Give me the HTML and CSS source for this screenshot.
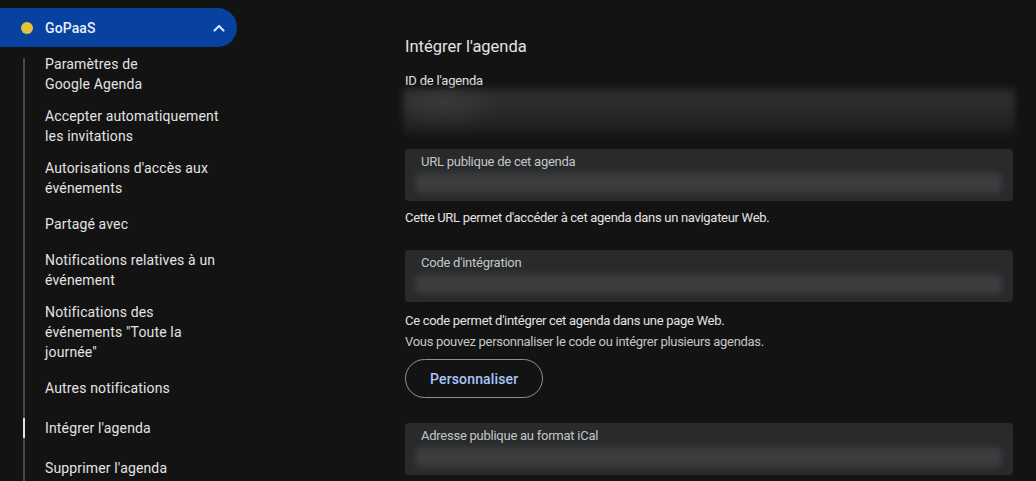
FILE: index.html
```html
<!DOCTYPE html>
<html lang="fr">
<head>
<meta charset="utf-8">
<title>Intégrer l'agenda</title>
<link rel="stylesheet" href="styles.css">
</head>
<body>
<div class="page">
  <aside class="sidebar">
    <div class="cal-header">
      <span class="dot"></span>
      <span class="cal-name">GoPaaS</span>
      <svg class="chevron" width="14" height="14" viewBox="0 0 14 14"><path d="M2.5 9.5 L7 5 L11.5 9.5" fill="none" stroke="#d3e3fd" stroke-width="2.2" stroke-linecap="round" stroke-linejoin="round"/></svg>
    </div>
    <nav class="nav">
      <div class="nav-item">Paramètres de<br>Google Agenda</div>
      <div class="nav-item">Accepter automatiquement<br>les invitations</div>
      <div class="nav-item">Autorisations d'accès aux<br>événements</div>
      <div class="nav-item">Partagé avec</div>
      <div class="nav-item">Notifications relatives à un<br>événement</div>
      <div class="nav-item">Notifications des<br>événements "Toute la<br>journée"</div>
      <div class="nav-item">Autres notifications</div>
      <div class="nav-item active">Intégrer l'agenda</div>
      <div class="nav-item">Supprimer l'agenda</div>
    </nav>
  </aside>
  <main class="main">
    <h2 class="title">Intégrer l'agenda</h2>
    <div class="id-label">ID de l'agenda</div>
    <div class="id-blur"></div>

    <div class="field first">
      <div class="field-label">URL publique de cet agenda</div>
      <div class="field-bar"></div>
    </div>
    <p class="help">Cette URL permet d'accéder à cet agenda dans un navigateur Web.</p>

    <div class="field second">
      <div class="field-label">Code d'intégration</div>
      <div class="field-bar"></div>
    </div>
    <p class="help2 lead">Ce code permet d'intégrer cet agenda dans une page Web.</p>
    <p class="help2 muted">Vous pouvez personnaliser le code ou intégrer plusieurs agendas.</p>
    <button class="btn">Personnaliser</button>

    <div class="field third">
      <div class="field-label">Adresse publique au format iCal</div>
      <div class="field-bar"></div>
    </div>
  </main>
</div>
</body>
</html>
```

FILE: styles.css
```css
* { box-sizing: border-box; }
html, body {
  margin: 0;
  padding: 0;
  background: #131314;
  height: 100%;
  overflow: hidden;
}
body {
  font-family: Roboto, "Liberation Sans", Arial, sans-serif;
  color: #e3e3e3;
}
.page {
  display: flex;
  align-items: flex-start;
}
.sidebar {
  width: 237px;
  flex: none;
  padding-top: 8px;
}
.cal-header {
  height: 39px;
  background: #0842a0;
  border-radius: 0 20px 20px 0;
  display: flex;
  align-items: center;
  padding-left: 21px;
  padding-right: 11px;
}
.dot {
  width: 12px;
  height: 12px;
  border-radius: 50%;
  background: #e6c33f;
  flex: none;
}
.cal-name {
  margin-left: 12px;
  font-size: 14px;
  font-weight: 500;
  color: #e8eefb;
  flex: 1;
  letter-spacing: 0.1px;
}
.chevron { flex: none; }
.nav {
  position: relative;
  padding-left: 45px;
  margin-top: 1px;
}
.nav::before {
  content: "";
  position: absolute;
  left: 23px;
  top: 10px;
  bottom: -100px;
  width: 2px;
  background: #444746;
}
.nav-item {
  position: relative;
  min-height: 40px;
  padding: 6px 0;
  display: flex;
  align-items: center;
  font-size: 14px;
  line-height: 20px;
  letter-spacing: 0.15px;
  color: #e3e3e3;
  white-space: nowrap;
}
.nav-item.active::before {
  content: "";
  position: absolute;
  left: -22px;
  top: 10px;
  width: 2px;
  height: 20px;
  background: #e3e3e3;
}
.main {
  margin-left: 168px;
  width: 608px;
  padding-top: 35px;
}
.title {
  margin: 0;
  font-size: 16.5px;
  line-height: 24px;
  font-weight: 400;
  color: #e3e3e3;
}
.id-label {
  margin-top: 15px;
  font-size: 13px;
  line-height: 14px;
  letter-spacing: -0.2px;
  color: #e3e3e3;
}
.id-blur {
  margin-left: -2px;
  width: 612px;
  height: 47px;
  background:
    radial-gradient(ellipse 60px 30px at 40px 14px, rgba(70,70,70,0.5), transparent),
    linear-gradient(180deg, #262626 0%, #2e2e2e 30%, #262626 60%, #1b1b1b 100%);
  filter: blur(3px);
}
.field {
  background: #282a2c;
  border-radius: 4px;
  height: 52px;
  padding: 5px 16px 8px;
}
.field.first { margin-top: 14px; }
.field.second { margin-top: 22px; }
.field.third { margin-top: 25px; }
.field-label {
  font-size: 13px;
  line-height: 16px;
  letter-spacing: -0.25px;
  color: #c4c7c5;
}
.field-bar {
  margin: 3px -5px 0 -6px;
  height: 20px;
  background: #3c3d3f;
  border-radius: 6px;
  filter: blur(3px);
}
.help {
  margin: 7px 0 0;
  font-size: 13px;
  line-height: 20px;
  letter-spacing: -0.3px;
  color: #e3e3e3;
}
.help2 {
  margin: 0;
  font-size: 13px;
  line-height: 21px;
  letter-spacing: -0.3px;
  color: #e3e3e3;
}
.help2.lead { margin-top: 8px; }
.help2.muted { color: #c4c7c5; }
.btn {
  display: block;
  margin-top: 7px;
  height: 39px;
  padding: 0 24px;
  border: 1px solid #8e918f;
  border-radius: 20px;
  background: transparent;
  font-family: Roboto, "Liberation Sans", Arial, sans-serif;
  font-size: 14px;
  font-weight: 500;
  color: #a8c7fa;
  letter-spacing: 0.15px;
}
```
